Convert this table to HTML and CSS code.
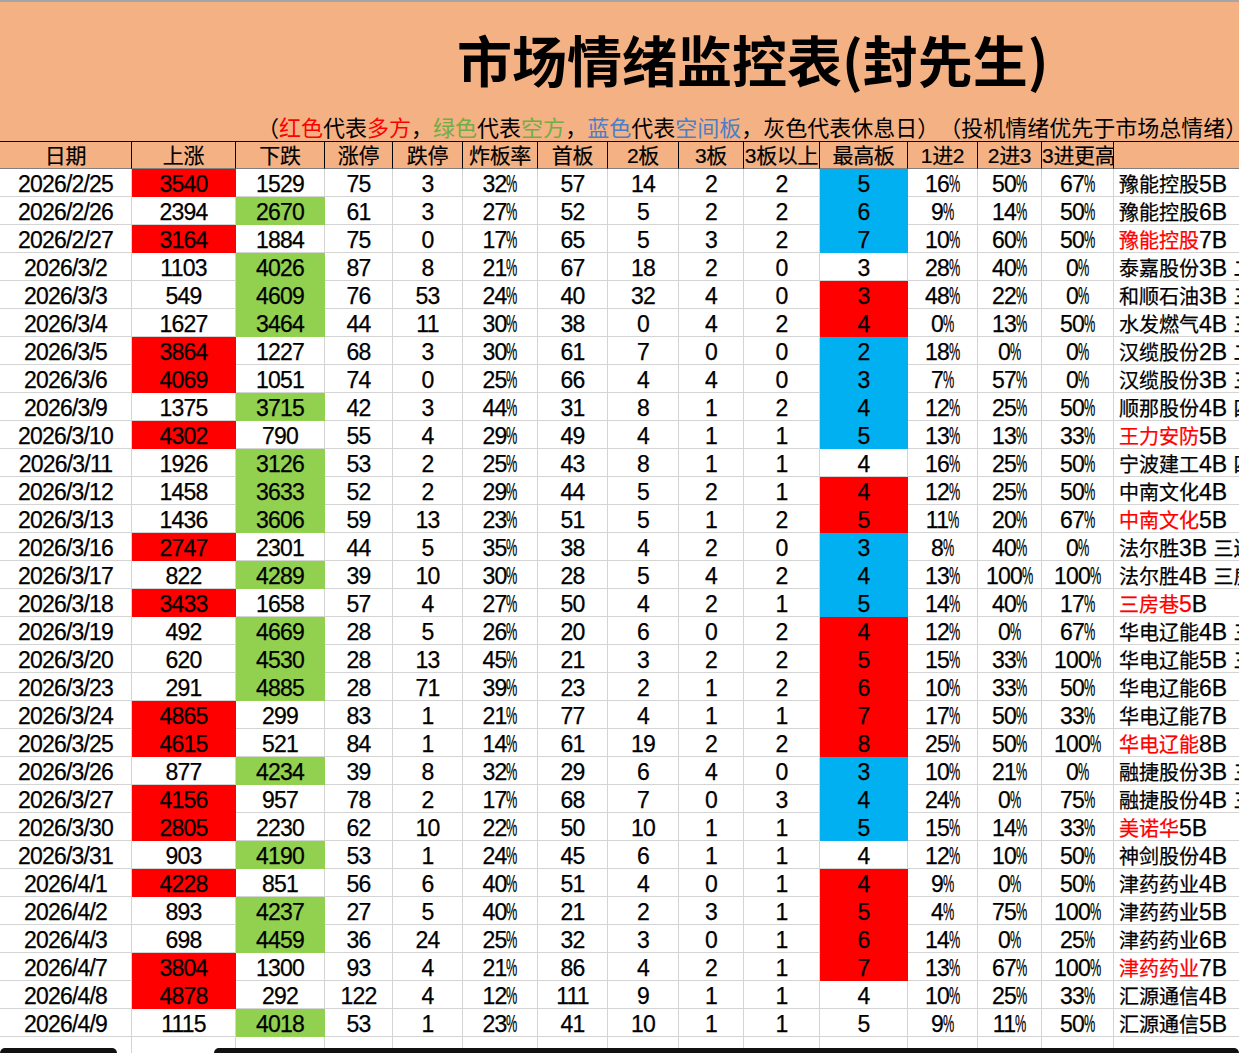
FILE: index.html
```html
<!DOCTYPE html>
<html lang="zh-CN">
<head>
<meta charset="utf-8">
<title>市场情绪监控表</title>
<link rel="stylesheet" href="styles.css">
</head>
<body>
<div class="banner">
  <h1 class="title">市场情绪监控表(封先生)</h1>
  <p class="legend">（<span class="red">红色</span>代表<span class="red">多方</span>，<span class="grn">绿色</span>代表<span class="grn">空方</span>，<span class="blu">蓝色</span>代表<span class="blu">空间板</span>，灰色代表休息日）（投机情绪优先于市场总情绪）</p>
</div>
<table class="sheet">
  <colgroup>
    <col class="w132"><col class="w104"><col class="w89"><col class="w68"><col class="w70"><col class="w75"><col class="w70"><col class="w71"><col class="w65"><col class="w76"><col class="w88"><col class="w70"><col class="w64"><col class="w72"><col class="w240">
  </colgroup>
  <thead>
    <tr><th>日期</th><th>上涨</th><th>下跌</th><th>涨停</th><th>跌停</th><th>炸板率</th><th>首板</th><th>2板</th><th>3板</th><th>3板以上</th><th>最高板</th><th>1进2</th><th>2进3</th><th>3进更高</th><th class="last"></th></tr>
  </thead>
  <tbody>
    <tr><td>2026/2/25</td><td class="up">3540</td><td>1529</td><td>75</td><td>3</td><td>32<i class="p">%</i></td><td>57</td><td>14</td><td>2</td><td>2</td><td class="hb">5</td><td>16<i class="p">%</i></td><td>50<i class="p">%</i></td><td>67<i class="p">%</i></td><td class="nm"><span class="cn">豫能控股</span>5B</td></tr>
    <tr><td>2026/2/26</td><td>2394</td><td class="dn">2670</td><td>61</td><td>3</td><td>27<i class="p">%</i></td><td>52</td><td>5</td><td>2</td><td>2</td><td class="hb">6</td><td>9<i class="p">%</i></td><td>14<i class="p">%</i></td><td>50<i class="p">%</i></td><td class="nm"><span class="cn">豫能控股</span>6B</td></tr>
    <tr><td>2026/2/27</td><td class="up">3164</td><td>1884</td><td>75</td><td>0</td><td>17<i class="p">%</i></td><td>65</td><td>5</td><td>3</td><td>2</td><td class="hb">7</td><td>10<i class="p">%</i></td><td>60<i class="p">%</i></td><td>50<i class="p">%</i></td><td class="nm"><span class="cn red">豫能控股</span>7B</td></tr>
    <tr><td>2026/3/2</td><td>1103</td><td class="dn">4026</td><td>87</td><td>8</td><td>21<i class="p">%</i></td><td>67</td><td>18</td><td>2</td><td>0</td><td>3</td><td>28<i class="p">%</i></td><td>40<i class="p">%</i></td><td>0<i class="p">%</i></td><td class="nm"><span class="cn">泰嘉股份</span>3B <span class="cn">二连板</span></td></tr>
    <tr><td>2026/3/3</td><td>549</td><td class="dn">4609</td><td>76</td><td>53</td><td>24<i class="p">%</i></td><td>40</td><td>32</td><td>4</td><td>0</td><td class="hr">3</td><td>48<i class="p">%</i></td><td>22<i class="p">%</i></td><td>0<i class="p">%</i></td><td class="nm"><span class="cn">和顺石油</span>3B <span class="cn">三连板</span></td></tr>
    <tr><td>2026/3/4</td><td>1627</td><td class="dn">3464</td><td>44</td><td>11</td><td>30<i class="p">%</i></td><td>38</td><td>0</td><td>4</td><td>2</td><td class="hr">4</td><td>0<i class="p">%</i></td><td>13<i class="p">%</i></td><td>50<i class="p">%</i></td><td class="nm"><span class="cn">水发燃气</span>4B <span class="cn">三连板</span></td></tr>
    <tr><td>2026/3/5</td><td class="up">3864</td><td>1227</td><td>68</td><td>3</td><td>30<i class="p">%</i></td><td>61</td><td>7</td><td>0</td><td>0</td><td class="hb">2</td><td>18<i class="p">%</i></td><td>0<i class="p">%</i></td><td>0<i class="p">%</i></td><td class="nm"><span class="cn">汉缆股份</span>2B <span class="cn">二连板</span></td></tr>
    <tr><td>2026/3/6</td><td class="up">4069</td><td>1051</td><td>74</td><td>0</td><td>25<i class="p">%</i></td><td>66</td><td>4</td><td>4</td><td>0</td><td class="hb">3</td><td>7<i class="p">%</i></td><td>57<i class="p">%</i></td><td>0<i class="p">%</i></td><td class="nm"><span class="cn">汉缆股份</span>3B <span class="cn">三连板</span></td></tr>
    <tr><td>2026/3/9</td><td>1375</td><td class="dn">3715</td><td>42</td><td>3</td><td>44<i class="p">%</i></td><td>31</td><td>8</td><td>1</td><td>2</td><td class="hb">4</td><td>12<i class="p">%</i></td><td>25<i class="p">%</i></td><td>50<i class="p">%</i></td><td class="nm"><span class="cn">顺那股份</span>4B <span class="cn">四连板</span></td></tr>
    <tr><td>2026/3/10</td><td class="up">4302</td><td>790</td><td>55</td><td>4</td><td>29<i class="p">%</i></td><td>49</td><td>4</td><td>1</td><td>1</td><td class="hb">5</td><td>13<i class="p">%</i></td><td>13<i class="p">%</i></td><td>33<i class="p">%</i></td><td class="nm"><span class="cn red">王力安防</span>5B</td></tr>
    <tr><td>2026/3/11</td><td>1926</td><td class="dn">3126</td><td>53</td><td>2</td><td>25<i class="p">%</i></td><td>43</td><td>8</td><td>1</td><td>1</td><td>4</td><td>16<i class="p">%</i></td><td>25<i class="p">%</i></td><td>50<i class="p">%</i></td><td class="nm"><span class="cn">宁波建工</span>4B <span class="cn">四连板</span></td></tr>
    <tr><td>2026/3/12</td><td>1458</td><td class="dn">3633</td><td>52</td><td>2</td><td>29<i class="p">%</i></td><td>44</td><td>5</td><td>2</td><td>1</td><td class="hr">4</td><td>12<i class="p">%</i></td><td>25<i class="p">%</i></td><td>50<i class="p">%</i></td><td class="nm"><span class="cn">中南文化</span>4B</td></tr>
    <tr><td>2026/3/13</td><td>1436</td><td class="dn">3606</td><td>59</td><td>13</td><td>23<i class="p">%</i></td><td>51</td><td>5</td><td>1</td><td>2</td><td class="hr">5</td><td>11<i class="p">%</i></td><td>20<i class="p">%</i></td><td>67<i class="p">%</i></td><td class="nm"><span class="cn red">中南文化</span>5B</td></tr>
    <tr><td>2026/3/16</td><td class="up">2747</td><td>2301</td><td>44</td><td>5</td><td>35<i class="p">%</i></td><td>38</td><td>4</td><td>2</td><td>0</td><td class="hb">3</td><td>8<i class="p">%</i></td><td>40<i class="p">%</i></td><td>0<i class="p">%</i></td><td class="nm"><span class="cn">法尔胜</span>3B <span class="cn">三连板</span></td></tr>
    <tr><td>2026/3/17</td><td>822</td><td class="dn">4289</td><td>39</td><td>10</td><td>30<i class="p">%</i></td><td>28</td><td>5</td><td>4</td><td>2</td><td class="hb">4</td><td>13<i class="p">%</i></td><td>100<i class="p">%</i></td><td>100<i class="p">%</i></td><td class="nm"><span class="cn">法尔胜</span>4B <span class="cn">三房巷</span></td></tr>
    <tr><td>2026/3/18</td><td class="up">3433</td><td>1658</td><td>57</td><td>4</td><td>27<i class="p">%</i></td><td>50</td><td>4</td><td>2</td><td>1</td><td class="hb">5</td><td>14<i class="p">%</i></td><td>40<i class="p">%</i></td><td>17<i class="p">%</i></td><td class="nm"><span class="red"><span class="cn">三房巷</span>5</span>B</td></tr>
    <tr><td>2026/3/19</td><td>492</td><td class="dn">4669</td><td>28</td><td>5</td><td>26<i class="p">%</i></td><td>20</td><td>6</td><td>0</td><td>2</td><td class="hr">4</td><td>12<i class="p">%</i></td><td>0<i class="p">%</i></td><td>67<i class="p">%</i></td><td class="nm"><span class="cn">华电辽能</span>4B <span class="cn">三连板</span></td></tr>
    <tr><td>2026/3/20</td><td>620</td><td class="dn">4530</td><td>28</td><td>13</td><td>45<i class="p">%</i></td><td>21</td><td>3</td><td>2</td><td>2</td><td class="hr">5</td><td>15<i class="p">%</i></td><td>33<i class="p">%</i></td><td>100<i class="p">%</i></td><td class="nm"><span class="cn">华电辽能</span>5B <span class="cn">三连板</span></td></tr>
    <tr><td>2026/3/23</td><td>291</td><td class="dn">4885</td><td>28</td><td>71</td><td>39<i class="p">%</i></td><td>23</td><td>2</td><td>1</td><td>2</td><td class="hr">6</td><td>10<i class="p">%</i></td><td>33<i class="p">%</i></td><td>50<i class="p">%</i></td><td class="nm"><span class="cn">华电辽能</span>6B</td></tr>
    <tr><td>2026/3/24</td><td class="up">4865</td><td>299</td><td>83</td><td>1</td><td>21<i class="p">%</i></td><td>77</td><td>4</td><td>1</td><td>1</td><td class="hr">7</td><td>17<i class="p">%</i></td><td>50<i class="p">%</i></td><td>33<i class="p">%</i></td><td class="nm"><span class="cn">华电辽能</span>7B</td></tr>
    <tr><td>2026/3/25</td><td class="up">4615</td><td>521</td><td>84</td><td>1</td><td>14<i class="p">%</i></td><td>61</td><td>19</td><td>2</td><td>2</td><td class="hr">8</td><td>25<i class="p">%</i></td><td>50<i class="p">%</i></td><td>100<i class="p">%</i></td><td class="nm"><span class="cn red">华电辽能</span>8B</td></tr>
    <tr><td>2026/3/26</td><td>877</td><td class="dn">4234</td><td>39</td><td>8</td><td>32<i class="p">%</i></td><td>29</td><td>6</td><td>4</td><td>0</td><td class="hb">3</td><td>10<i class="p">%</i></td><td>21<i class="p">%</i></td><td>0<i class="p">%</i></td><td class="nm"><span class="cn">融捷股份</span>3B <span class="cn">三连板</span></td></tr>
    <tr><td>2026/3/27</td><td class="up">4156</td><td>957</td><td>78</td><td>2</td><td>17<i class="p">%</i></td><td>68</td><td>7</td><td>0</td><td>3</td><td class="hb">4</td><td>24<i class="p">%</i></td><td>0<i class="p">%</i></td><td>75<i class="p">%</i></td><td class="nm"><span class="cn">融捷股份</span>4B <span class="cn">三连板</span></td></tr>
    <tr><td>2026/3/30</td><td class="up">2805</td><td>2230</td><td>62</td><td>10</td><td>22<i class="p">%</i></td><td>50</td><td>10</td><td>1</td><td>1</td><td class="hb">5</td><td>15<i class="p">%</i></td><td>14<i class="p">%</i></td><td>33<i class="p">%</i></td><td class="nm"><span class="cn red">美诺华</span>5B</td></tr>
    <tr><td>2026/3/31</td><td>903</td><td class="dn">4190</td><td>53</td><td>1</td><td>24<i class="p">%</i></td><td>45</td><td>6</td><td>1</td><td>1</td><td>4</td><td>12<i class="p">%</i></td><td>10<i class="p">%</i></td><td>50<i class="p">%</i></td><td class="nm"><span class="cn">神剑股份</span>4B</td></tr>
    <tr><td>2026/4/1</td><td class="up">4228</td><td>851</td><td>56</td><td>6</td><td>40<i class="p">%</i></td><td>51</td><td>4</td><td>0</td><td>1</td><td class="hr">4</td><td>9<i class="p">%</i></td><td>0<i class="p">%</i></td><td>50<i class="p">%</i></td><td class="nm"><span class="cn">津药药业</span>4B</td></tr>
    <tr><td>2026/4/2</td><td>893</td><td class="dn">4237</td><td>27</td><td>5</td><td>40<i class="p">%</i></td><td>21</td><td>2</td><td>3</td><td>1</td><td class="hr">5</td><td>4<i class="p">%</i></td><td>75<i class="p">%</i></td><td>100<i class="p">%</i></td><td class="nm"><span class="cn">津药药业</span>5B</td></tr>
    <tr><td>2026/4/3</td><td>698</td><td class="dn">4459</td><td>36</td><td>24</td><td>25<i class="p">%</i></td><td>32</td><td>3</td><td>0</td><td>1</td><td class="hr">6</td><td>14<i class="p">%</i></td><td>0<i class="p">%</i></td><td>25<i class="p">%</i></td><td class="nm"><span class="cn">津药药业</span>6B</td></tr>
    <tr><td>2026/4/7</td><td class="up">3804</td><td>1300</td><td>93</td><td>4</td><td>21<i class="p">%</i></td><td>86</td><td>4</td><td>2</td><td>1</td><td class="hr">7</td><td>13<i class="p">%</i></td><td>67<i class="p">%</i></td><td>100<i class="p">%</i></td><td class="nm"><span class="cn red">津药药业</span>7B</td></tr>
    <tr><td>2026/4/8</td><td class="up">4878</td><td>292</td><td>122</td><td>4</td><td>12<i class="p">%</i></td><td>111</td><td>9</td><td>1</td><td>1</td><td>4</td><td>10<i class="p">%</i></td><td>25<i class="p">%</i></td><td>33<i class="p">%</i></td><td class="nm"><span class="cn">汇源通信</span>4B</td></tr>
    <tr><td>2026/4/9</td><td>1115</td><td class="dn">4018</td><td>53</td><td>1</td><td>23<i class="p">%</i></td><td>41</td><td>10</td><td>1</td><td>1</td><td>5</td><td>9<i class="p">%</i></td><td>11<i class="p">%</i></td><td>50<i class="p">%</i></td><td class="nm"><span class="cn">汇源通信</span>5B</td></tr>
    <tr><td></td><td></td><td></td><td></td><td></td><td></td><td></td><td></td><td></td><td></td><td></td><td></td><td></td><td></td><td class="nm"></td></tr>
  </tbody>
</table>
<div class="tabbar"><span class="tab tab-a"></span><span class="tab tab-b"></span></div>
</body>
</html>
```
FILE: styles.css
```css
html, body {
  margin: 0;
  padding: 0;
  overflow: hidden;
  background: #ffffff;
}
body {
  width: 1239px;
  height: 1053px;
  font-family: "Liberation Sans", "Noto Sans CJK SC", sans-serif;
  color: #000;
  text-spacing-trim: space-all;
}

.banner {
  background: #f4b183;
  border-top: 2px solid #a6a6a6;
  height: 139px;
  display: flex;
  flex-direction: column;
  overflow: hidden;
}
.title {
  margin: 29px 0 0 457px;
  font: 700 55px/55px "Noto Sans CJK SC", sans-serif;
  white-space: nowrap;
}
.legend {
  margin: 29px 0 0 257px;
  font: 400 22px/22px "Noto Sans CJK SC", sans-serif;
  white-space: nowrap;
  text-spacing-trim: space-all;
}
.red { color: #ff0000; }
.grn { color: #70ad47; }
.blu { color: #4a7ec7; }

.sheet {
  border-collapse: separate;
  border-spacing: 0;
  table-layout: fixed;
  width: 1354px;
}
.w132 { width: 132px; }
.w104 { width: 104px; }
.w89 { width: 89px; }
.w68 { width: 68px; }
.w70 { width: 70px; }
.w75 { width: 75px; }
.w71 { width: 71px; }
.w65 { width: 65px; }
.w76 { width: 76px; }
.w88 { width: 88px; }
.w64 { width: 64px; }
.w72 { width: 72px; }
.w240 { width: 240px; }

.sheet th,
.sheet td {
  padding: 0;
  white-space: nowrap;
  overflow: hidden;
  text-align: center;
  box-sizing: border-box;
}
.sheet th {
  background: #f4b183;
  border-top: 1px solid #000;
  border-right: 1px solid #000;
  border-bottom: 1px solid #7f7f7f;
  height: 28px;
  padding-top: 2px;
  line-height: 24px;
  font-size: 21px;
  font-weight: 400;
  letter-spacing: -0.3px;
  -webkit-text-stroke: 0.2px #000;
}
.sheet th.last { border-right: 0; }
.sheet td {
  border-right: 1px solid #d4d4d4;
  border-bottom: 1px solid #d4d4d4;
  height: 28px;
  padding-top: 4px;
  line-height: 23px;
  font-size: 23px;
  letter-spacing: -0.8px;
  -webkit-text-stroke: 0.25px currentColor;
}
.sheet td.nm {
  text-align: left;
  padding-left: 5px;
  border-right: 0;
  letter-spacing: 0;
}
.cn {
  font-family: "Noto Sans CJK SC", sans-serif;
  font-size: 20px;
  line-height: 1;
  letter-spacing: 0;
}
.p {
  font-style: normal;
  display: inline-block;
  width: 11px;
  letter-spacing: 0;
  transform: scaleX(0.55);
  transform-origin: 0 50%;
}

.sheet td.up { background: #ff0000; border-color: #ff0000; }
.sheet td.dn { background: #92d050; border-color: #92d050; }
.sheet td.hb { background: #00b0f0; border-color: #00b0f0; }
.sheet td.hr { background: #ff0000; border-color: #ff0000; }

.tabbar {
  position: fixed;
  left: 0;
  right: 0;
  bottom: 0;
  height: 5px;
  display: flex;
  gap: 97px;
}
.tab {
  background: #111;
  border-radius: 6px 6px 0 0;
}
.tab-a { width: 117px; }
.tab-b { flex: 1; }
```
